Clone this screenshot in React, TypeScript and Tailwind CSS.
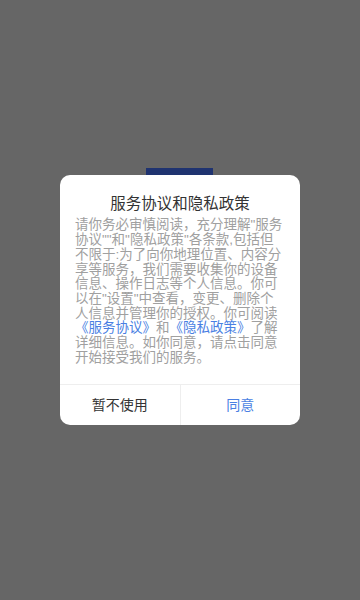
import React from 'react'

const lines: React.ReactNode[] = [
  '请你务必审慎阅读，充分理解"服务',
  '协议""和"隐私政策"各条款,包括但',
  '不限于:为了向你地理位置、内容分',
  '享等服务，我们需要收集你的设备',
  '信息、操作日志等个人信息。你可',
  '以在"设置"中查看，变更、删除个',
  '人信息并管理你的授权。你可阅读',
  <>
    <span className="text-[#4a7fe3]">《服务协议》</span>和<span className="text-[#4a7fe3]">《隐私政策》</span>了解
  </>,
  '详细信息。如你同意，请点击同意',
  '开始接受我们的服务。',
]

export default function App() {
  return (
    <div
      className="relative w-full h-[600px] bg-[#666666] flex items-center justify-center overflow-hidden"
      style={{ fontFamily: '"Noto Sans CJK SC", "Noto Sans", sans-serif' }}
    >
      {/* page content peeking behind the dialog */}
      <div className="absolute left-[146px] top-[168px] w-[67px] h-[12px] bg-[#1f3370]" />

      <div className="relative w-[240px] bg-white rounded-[10px] overflow-hidden">
        <h1 className="pt-[17px] text-center text-[15.5px] leading-[20px] text-[#333333]">
          服务协议和隐私政策
        </h1>
        <div className="px-[15px] pt-[6px] pb-[18px] text-[13.5px] leading-[14.7px] text-[#a0a0a0] font-['Liberation_Sans','Noto_Sans_CJK_SC',sans-serif]">
          {lines.map((line, i) => (
            <div key={i} className="whitespace-nowrap">
              {line}
            </div>
          ))}
        </div>
        <div className="flex border-t border-[#eeeeee] h-[41px]">
          <button className="flex-1 text-[14px] text-[#333333]">暂不使用</button>
          <div className="w-px bg-[#eeeeee]" />
          <button className="flex-1 text-[14px] text-[#4a7fe3]">同意</button>
        </div>
      </div>
    </div>
  )
}
